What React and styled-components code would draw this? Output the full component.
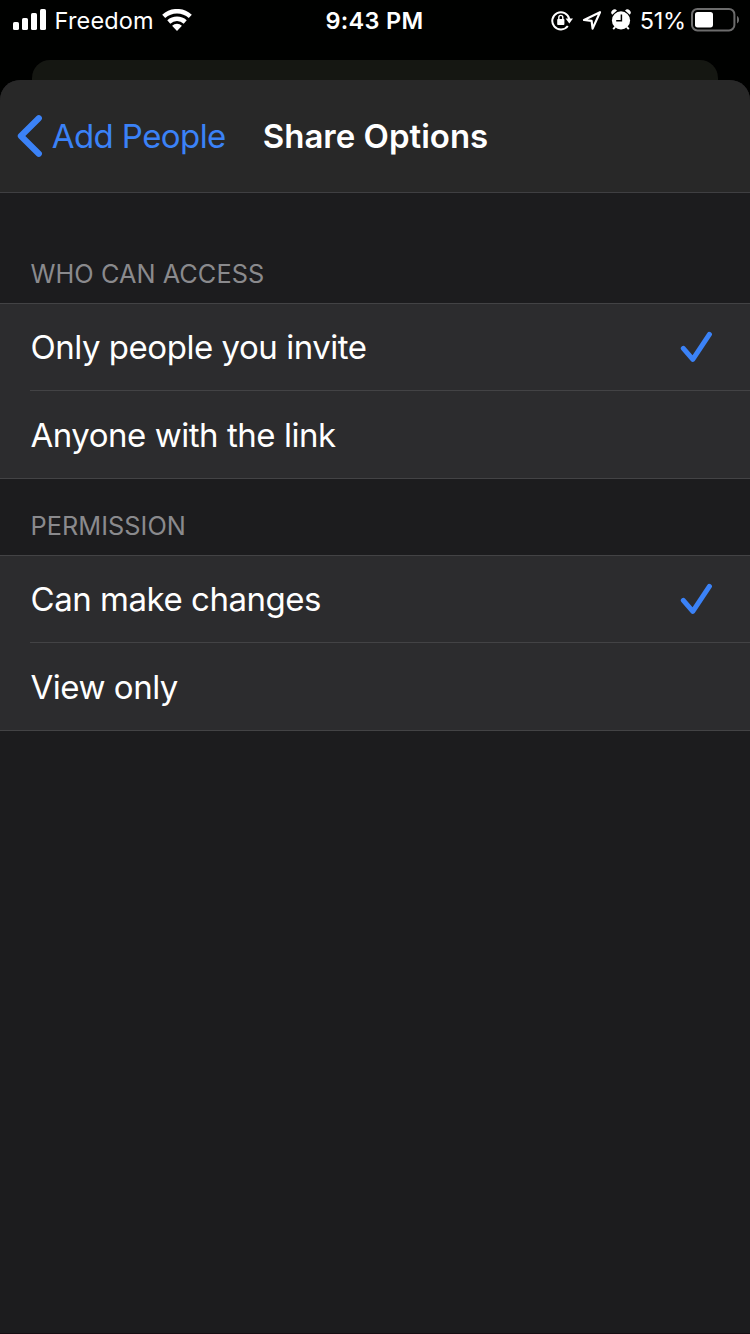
import React, { useState } from 'react';
import styled, { createGlobalStyle } from 'styled-components';

const sections = [
  {
    id: 'access',
    title: 'WHO CAN ACCESS',
    options: ['Only people you invite', 'Anyone with the link']
  },
  {
    id: 'permission',
    title: 'PERMISSION',
    options: ['Can make changes', 'View only']
  }
];

const App = () => {
  const [selected, setSelected] = useState({ access: 0, permission: 0 });

  return (
    <Screen>
      <GlobalStyle />
      <StatusBar>
        <StatusSide>
          <SignalIcon />
          <Carrier>Freedom</Carrier>
          <WifiIcon />
        </StatusSide>
        <Time>9:43 PM</Time>
        <StatusSide $end>
          <RotationLockIcon />
          <LocationIcon />
          <AlarmIcon />
          <Percent>51%</Percent>
          <BatteryIcon />
        </StatusSide>
      </StatusBar>

      <PreviousSheet />
      <Sheet>
        <Header>
          <BackButton type="button">
            <BackIcon />
            <span>Add People</span>
          </BackButton>
          <Title>Share Options</Title>
        </Header>

        {sections.map((section, index) => (
          <section key={section.id}>
            <SectionTitle $first={index === 0}>{section.title}</SectionTitle>
            <List>
              {section.options.map((option, i) => (
                <Option
                  key={option}
                  onClick={() => setSelected({ ...selected, [section.id]: i })}
                >
                  <OptionBody>
                    <span>{option}</span>
                    {selected[section.id] === i && <CheckIcon />}
                  </OptionBody>
                </Option>
              ))}
            </List>
          </section>
        ))}
      </Sheet>
    </Screen>
  );
};

const SignalIcon = () => (
  <svg width="34" height="22" viewBox="0 0 34 22" fill="#fff">
    <rect x="0" y="13" width="6" height="8" rx="1.6" />
    <rect x="9" y="9" width="6" height="12" rx="1.6" />
    <rect x="18" y="4" width="6" height="17" rx="1.6" />
    <rect x="27" y="0" width="6" height="21" rx="1.6" />
  </svg>
);

const WifiIcon = () => (
  <svg width="30" height="22" viewBox="0 0 30 22" fill="none" stroke="#fff" strokeWidth="4.5">
    <path d="M1.7 7.3a19.8 19.8 0 0 1 26.6 0" />
    <path d="M6.8 13a12.2 12.2 0 0 1 16.4 0" />
    <path d="M15 22l-4.9-5.2a7 7 0 0 1 9.8 0z" fill="#fff" stroke="none" />
  </svg>
);

const RotationLockIcon = () => (
  <svg width="22" height="22" viewBox="0 0 22 22" fill="none" stroke="#fff" strokeWidth="2">
    <path d="M16.8 17a8.6 8.6 0 1 1 1.5-6.9" />
    <path d="M14.6 9.6h7.4l-3.7 5z" fill="#fff" stroke="none" />
    <rect x="6.2" y="10" width="7.2" height="6" rx="0.8" fill="#fff" stroke="none" />
    <path d="M7.8 10.6V8.4a2 2 0 0 1 4 0v2.2" strokeWidth="1.4" />
  </svg>
);

const LocationIcon = () => (
  <svg width="20" height="20" viewBox="0 0 20 20" fill="none" stroke="#fff" strokeWidth="2.2" strokeLinejoin="round">
    <path d="M18 2.2L2 10l7.6.9 1 7.7z" />
  </svg>
);

const AlarmIcon = () => (
  <svg width="20" height="22" viewBox="0 0 20 22">
    <circle cx="10" cy="11.4" r="9.1" fill="#fff" />
    <path d="M1.2 5.8a3.2 3.2 0 0 1 4.8-4.4zM18.8 5.8a3.2 3.2 0 0 0-4.8-4.4z" fill="#fff" />
    <path d="M4.2 17.8l-2 2.4M15.8 17.8l2 2.4" stroke="#fff" strokeWidth="1.9" />
    <path d="M10.4 5.6v6.2H5.2" fill="none" stroke="#000" strokeWidth="1.5" />
  </svg>
);

const BatteryIcon = () => (
  <svg width="48" height="24" viewBox="0 0 48 24">
    <rect x="1" y="1" width="42.4" height="21.4" rx="5.4" fill="none" stroke="#6c6c6c" strokeWidth="2" />
    <rect x="4" y="4" width="18" height="15.4" rx="2.6" fill="#fff" />
    <path d="M46 8c1.3.6 2 2 2 3.7s-.7 3.1-2 3.7z" fill="#6c6c6c" />
  </svg>
);

const BackIcon = () => (
  <svg width="26" height="44" viewBox="0 0 26 44" fill="none" stroke="#3b82f7" strokeWidth="6.2" strokeLinecap="round" strokeLinejoin="round">
    <path d="M21.8 4.2L3.9 22l17.9 17.8" />
  </svg>
);

const CheckIcon = () => (
  <svg width="34" height="32" viewBox="0 0 34 32" fill="none" stroke="#3b82f7" strokeWidth="5" strokeLinecap="round" strokeLinejoin="round">
    <path d="M4.3 17.3L13.8 28.4 30.4 3.4" />
  </svg>
);

const GlobalStyle = createGlobalStyle`
  * {
    box-sizing: border-box;
  }

  body {
    margin: 0;
    background: #000100;
    color: #fff;
    font-family: Inter, "Liberation Sans", sans-serif;
  }

  svg {
    display: block;
    flex-shrink: 0;
  }
`;

const Screen = styled.div`
  display: flex;
  flex-direction: column;
  width: 750px;
  height: 1334px;
  overflow: hidden;
  background: #000100;
`;

const StatusBar = styled.div`
  display: grid;
  grid-template-columns: 1fr auto 1fr;
  align-items: center;
  height: 40px;
  margin-bottom: 20px;
  padding: 0 11px 0 13px;
  font-size: 23.5px;
  line-height: 38px;

  span {
    padding-top: 2px;
  }
`;

const StatusSide = styled.div`
  display: flex;
  align-items: center;
  justify-content: ${({ $end }) => ($end ? 'flex-end' : 'flex-start')};
  gap: 9px;
  height: 40px;
`;

const Carrier = styled.span`
  margin: 0 -0.5px 0 -1.4px;
  letter-spacing: 0.15px;
`;

const Time = styled.span`
  padding-right: 3px;
  font-weight: 600;
  letter-spacing: 0.3px;
`;

const Percent = styled.span`
  letter-spacing: -0.2px;
  margin-right: -4px;
`;

const PreviousSheet = styled.div`
  flex-shrink: 0;
  height: 20px;
  margin: 0 32px;
  border-radius: 18px 18px 0 0;
  background: #151712;
`;

const Sheet = styled.main`
  flex: 1;
  overflow: hidden;
  border-bottom: 1px solid #160d12;
  border-radius: 20px 20px 0 0;
  background: #1c1c1e;
`;

const Header = styled.header`
  display: grid;
  grid-template-columns: 1fr auto 1fr;
  align-items: center;
  height: 113px;
  padding: 0 17px;
  border-bottom: 1px solid #3f3f42;
  background: #282828;
`;

const BackButton = styled.button`
  display: flex;
  align-items: center;
  gap: 8.7px;
  padding: 0;
  border: 0;
  background: none;
  color: #3b82f7;
  font: 400 33px/44px Inter, "Liberation Sans", sans-serif;
  letter-spacing: -0.58px;
  white-space: nowrap;
`;

const Title = styled.h1`
  margin: 0;
  padding-left: 1px;
  font-size: 33px;
  font-weight: 600;
  line-height: 44px;
  letter-spacing: 0;
`;

const SectionTitle = styled.h2`
  display: flex;
  align-items: flex-end;
  height: ${({ $first }) => ($first ? 110 : 76)}px;
  margin: 0;
  padding: 0 30.5px 13px;
  color: #8a8a8d;
  font-size: 25.3px;
  font-weight: 400;
  line-height: 32px;
  letter-spacing: 0.05px;
`;

const List = styled.ul`
  margin: 0;
  padding: 0;
  border-top: 1px solid #434345;
  border-bottom: 1px solid #434345;
  background: #2c2c2e;
  list-style: none;
`;

const Option = styled.li`
  padding-left: 30px;
  cursor: pointer;

  & + & > div {
    height: 88px;
    border-top: 1px solid #434345;
  }
`;

const OptionBody = styled.div`
  display: flex;
  align-items: center;
  justify-content: space-between;
  height: 86px;
  padding: 0 37px 0 0.5px;
  font-size: 33px;
  letter-spacing: -0.47px;
`;

export default App;
